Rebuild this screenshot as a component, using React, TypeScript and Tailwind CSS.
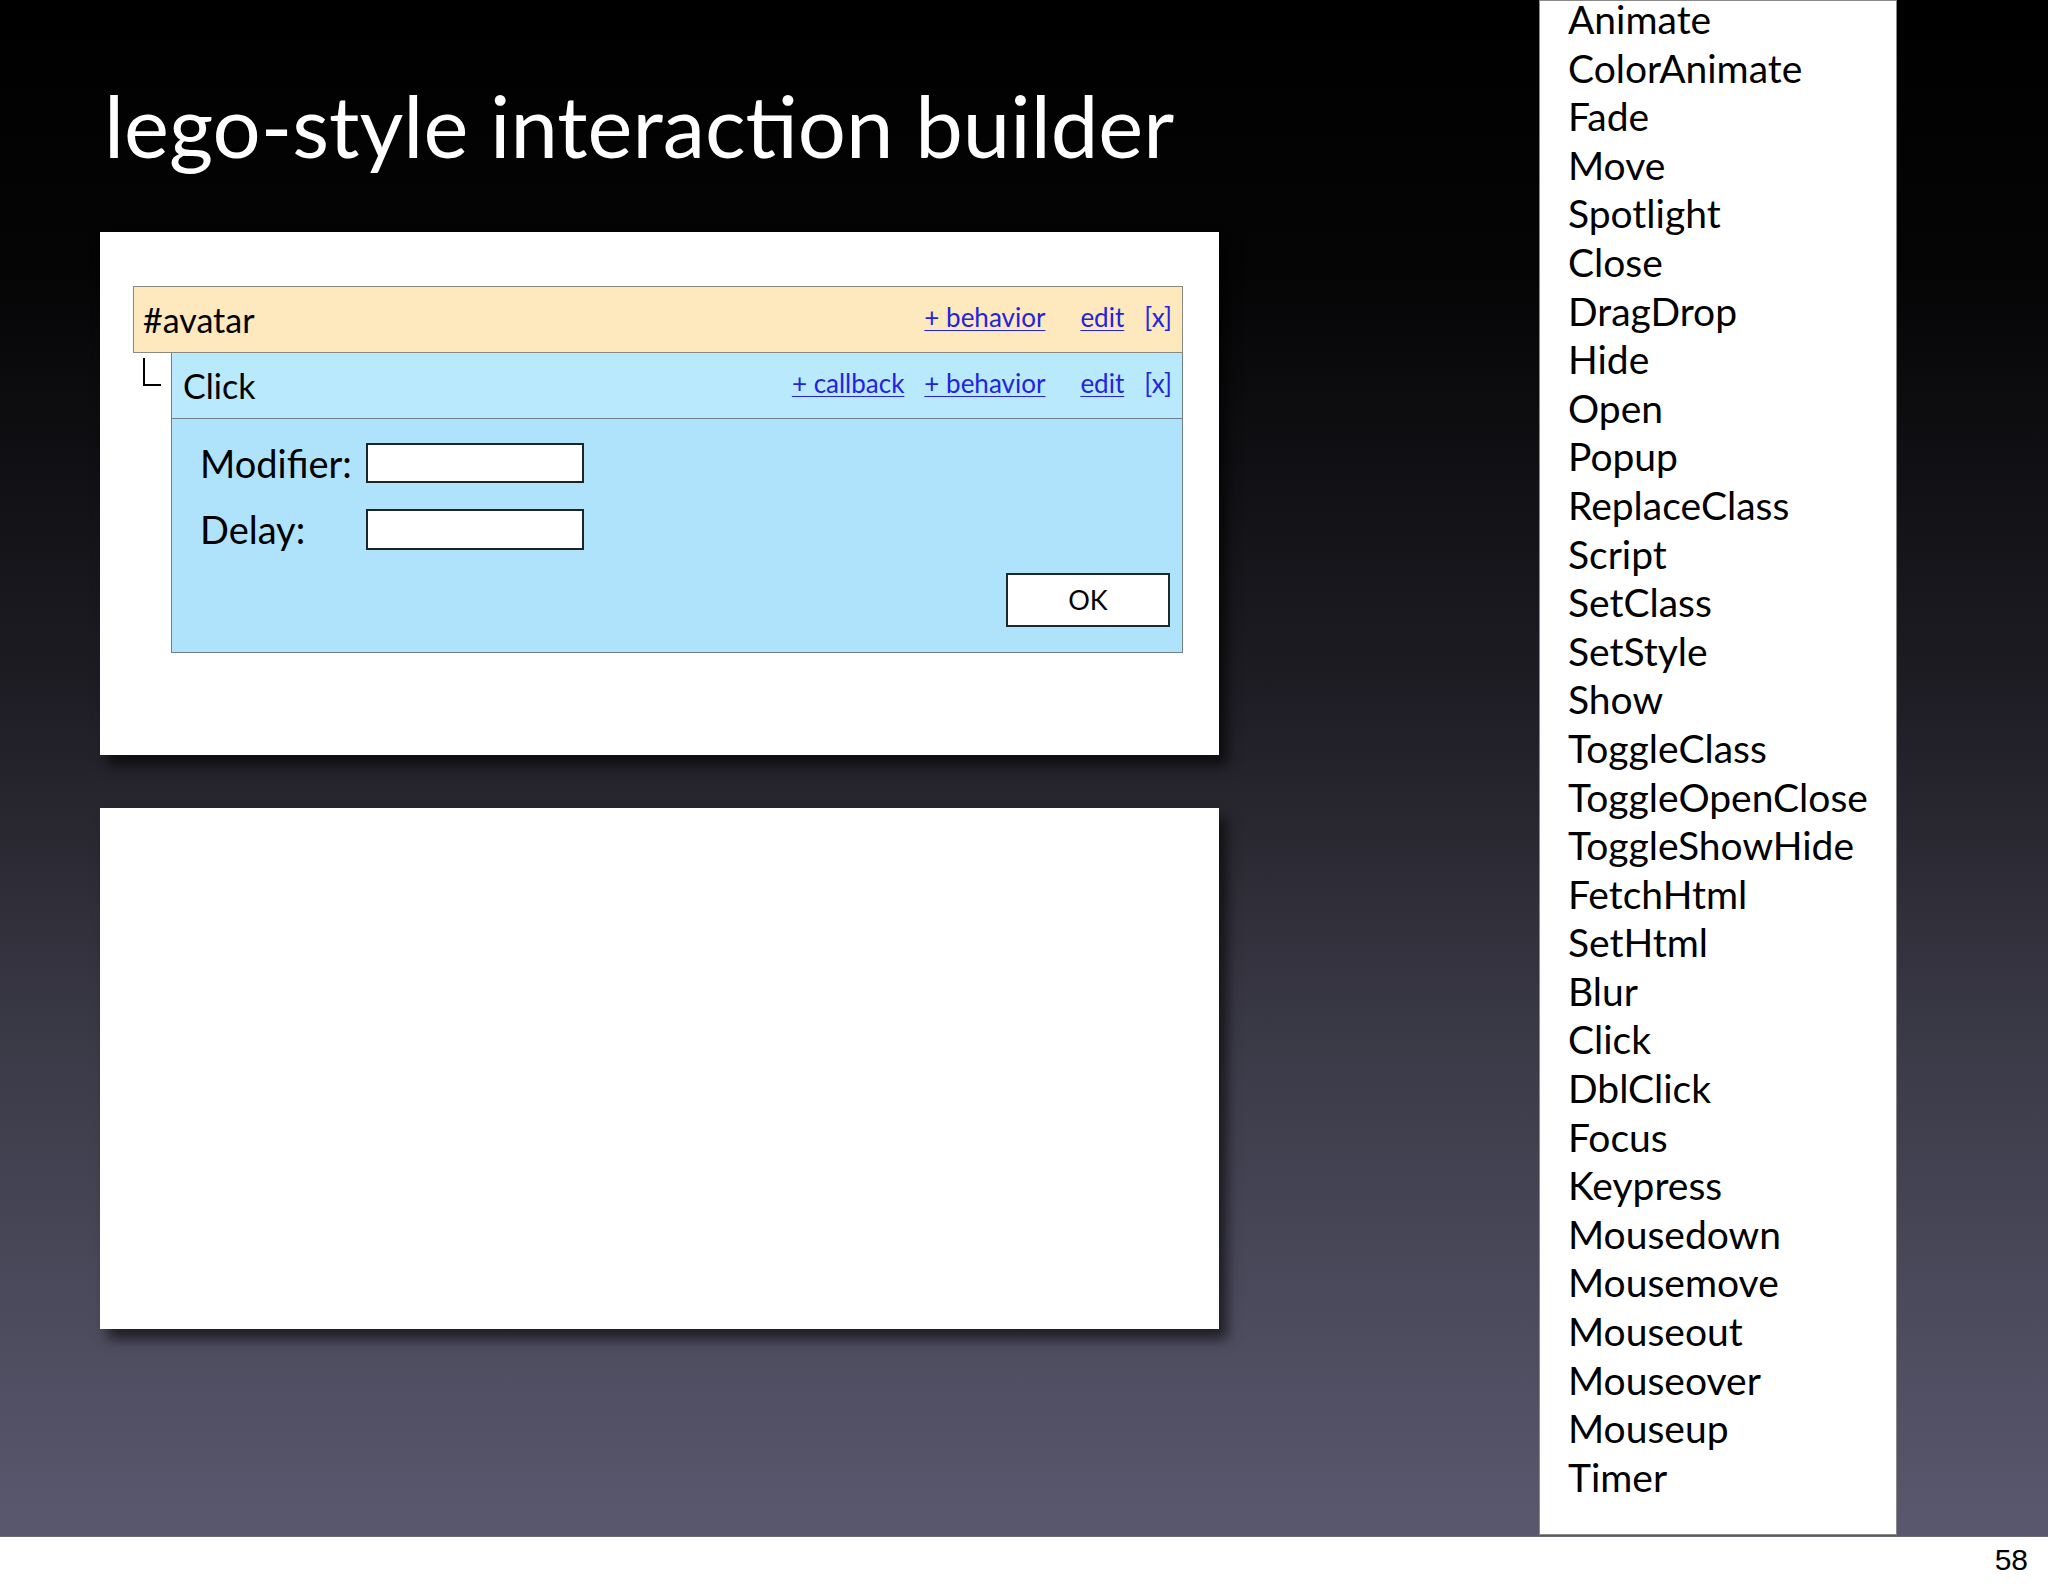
import React from "react";

const items = [
  "Animate","ColorAnimate","Fade","Move","Spotlight","Close","DragDrop","Hide","Open","Popup",
  "ReplaceClass","Script","SetClass","SetStyle","Show","ToggleClass","ToggleOpenClose","ToggleShowHide",
  "FetchHtml","SetHtml","Blur","Click","DblClick","Focus","Keypress","Mousedown","Mousemove",
  "Mouseout","Mouseover","Mouseup","Timer",
];

function Links({ callback }: { callback?: boolean }) {
  return (
    <div className="flex items-center text-[26px] text-[#2323e0] mb-[5px]">
      {callback && <span className="underline underline-offset-[3px] decoration-1 mr-[20px]">+ callback</span>}
      <span className="underline underline-offset-[3px] decoration-1 mr-[35px]">+ behavior</span>
      <span className="underline underline-offset-[3px] decoration-1 mr-[20px]">edit</span>
      <span>[x]</span>
    </div>
  );
}

export default function App() {
  return (
    <div className="w-[2048px] h-[1587px] flex flex-col font-['Lato',sans-serif] overflow-hidden">
      <div className="h-[1537px] flex bg-[linear-gradient(180deg,#000000_0%,#050506_18%,#1e1d24_45%,#3d3c4a_70%,#5a586e_100%)] border-b border-[#6a6a70]">
        <div className="w-[1219px] pl-[100px] flex flex-col">
          <h1 className="pt-[83px] pl-[4px] text-[85px] leading-none text-white font-normal">lego-style interaction builder</h1>
          <div className="mt-[64px] h-[523px] bg-white shadow-[8px_10px_12px_rgba(0,0,0,0.65)] pt-[54px] pl-[33px] pr-[36px]">
            <div className="h-[67px] bg-[#fee8bd] border border-[#8a8a80] flex items-center justify-between pl-[9px] pr-[10px]">
              <span className="text-[34px] text-black">#avatar</span>
              <Links />
            </div>
            <div className="flex">
              <div className="w-[38px] shrink-0">
                <div className="ml-[10px] mt-[5px] w-[18px] h-[28px] border-l-2 border-b-2 border-black" />
              </div>
              <div className="flex-1 border border-t-0 border-[#6f7f86] bg-[#aee3fb]">
                <div className="h-[66px] bg-[#b9e9fc] border-b border-[#6f7f86] flex items-center justify-between pl-[11px] pr-[10px]">
                  <span className="text-[34px] text-black">Click</span>
                  <Links callback />
                </div>
                <div className="pt-[24px] pl-[28px] pr-[12px] pb-[25px] flex flex-col">
                  <div className="flex items-center h-[40px]">
                    <span className="w-[166px] text-[38px] text-black">Modifier:</span>
                    <div className="w-[218px] h-[40px] bg-white border-2 border-[#1e2424]" />
                  </div>
                  <div className="flex items-center h-[41px] mt-[26px]">
                    <span className="w-[166px] text-[38px] text-black">Delay:</span>
                    <div className="w-[218px] h-[41px] bg-white border-2 border-[#1e2424]" />
                  </div>
                  <div className="flex justify-end mt-[23px]">
                    <div className="w-[164px] h-[54px] bg-white border-2 border-[#1c2a2a] flex items-center justify-center text-[27px] text-black">OK</div>
                  </div>
                </div>
              </div>
            </div>
          </div>
          <div className="mt-[53px] h-[521px] bg-white shadow-[8px_10px_12px_rgba(0,0,0,0.6)]" />
        </div>
        <div className="ml-[320px] w-[358px] h-[1535px] bg-white border border-[#8a8a8a] pl-[28px] overflow-hidden">
          <ul className="mt-[-6px]">
            {items.map((it) => (
              <li key={it} className="text-[39px] leading-[48.6px] text-black">{it}</li>
            ))}
          </ul>
        </div>
      </div>
      <div className="h-[50px] bg-white flex items-center justify-end pr-[20px] pb-[6px]">
        <span className="font-['Liberation_Sans',sans-serif] text-[30px] text-black">58</span>
      </div>
    </div>
  );
}
